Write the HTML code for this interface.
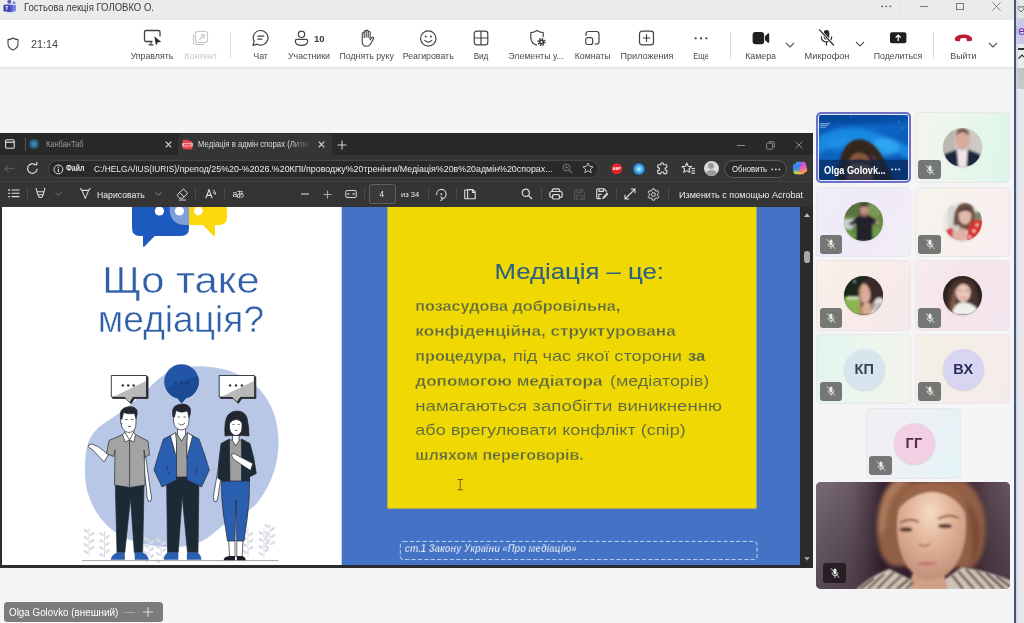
<!DOCTYPE html>
<html lang="ru">
<head>
<meta charset="utf-8">
<title>Гостьова лекція ГОЛОВКО О.</title>
<style>
*{box-sizing:border-box;margin:0;padding:0}
html,body{width:1024px;height:623px;overflow:hidden;background:#f5f5f5}
body{position:relative;font-family:"Liberation Sans",sans-serif;color:#424242;filter:blur(.32px)}
.abs{position:absolute}
#titlebar{left:0;top:0;width:1014px;height:20px;background:#ebebeb}
#titlebar .t{left:23.800px;top:0.500px;font-size:10.300px;line-height:14px;color:#3a3a3a;white-space:nowrap}
#toolbar{left:0;top:20px;width:1014px;height:48.300px;background:#fff;border-bottom:1px solid #e6e6e6;box-shadow:0 1px 2px rgba(0,0,0,.06)}
.tb{position:absolute;top:29.6px;font-size:8.8px;line-height:12px;color:#4a4a4a;white-space:nowrap;text-align:center;transform:translateX(-50%)}
.tb.dis{color:#c4c4c4}
.ico{position:absolute;overflow:visible}
.sep{position:absolute;width:1px;background:#dcdcdc;top:12px;height:26px}
#rightwin{left:1014px;top:0;width:10px;height:623px;background:#e7e7ea;overflow:hidden}
#rightwin .edge{left:0;top:0;width:2.200px;height:623px;background:#435283}
/* browser */
#share{left:0;top:133px;width:813px;height:435px;background:#2d2d2d;overflow:hidden}
#tabbar{left:0;top:0;width:813px;height:22px;background:#292929}
#acttab{left:178px;top:1px;width:154px;height:21px;background:#353535;border-radius:5px 5px 0 0}
#addr{left:0;top:22px;width:813px;height:26px;background:#353535}
#pdfbar{left:0;top:48px;width:813px;height:26px;background:#343434;border-top:1px solid #404040}
.tile{position:absolute;width:94.600px;height:70.400px;border-radius:4.500px;border:1px solid #e9e7ea;overflow:hidden}
.av{position:absolute;left:27px;top:14.300px;width:39px;height:39px;border-radius:50%;overflow:hidden;box-shadow:0 1px 2px rgba(0,0,0,.12)}
.av svg{position:absolute;left:0;top:0}
.av.ini{left:26.500px;top:13.600px;width:41px;height:41px;font-size:14.500px;font-weight:bold;line-height:41px;text-align:center;letter-spacing:.2px}
.mb{position:absolute;left:2.200px;top:46.800px;width:22.800px;height:19.400px;border-radius:3px;background:#747773}
.mb svg{position:absolute;left:5.400px;top:3.700px}
#pdfbar>*{margin-top:-0.9px}
.psep{position:absolute;top:7px;width:1px;height:11px;background:#4e4e4e}
.sx{transform-origin:0 50%}
.wt{position:absolute;color:#e6e6e6;white-space:nowrap;font-size:9.5px;line-height:12px}
#slide{left:2px;top:74px;width:798px;height:358px;background:#fff;overflow:hidden}
#scroll{left:800.200px;top:74px;width:12.800px;height:361px;background:#2b2b2b}
</style>
</head>
<body>
<!-- TITLE BAR -->
<div id="titlebar" class="abs">
  <svg class="ico" style="left:2.500px;top:0" width="14" height="13" viewBox="0 0 14 13" filter="url(#tb05)"><defs><filter id="tb05"><feGaussianBlur stdDeviation="0.350"/></filter></defs><circle cx="6.300" cy="1.800" r="2" fill="#5b5fc7"/><circle cx="11" cy="2.800" r="1.500" fill="#7b83eb"/><path d="M6.500 5 H12.300 Q13 5 13 5.700 V9 Q13 12 10 12 Q7.500 12 6.500 10 Z" fill="#7b83eb"/><path d="M3 4.800 H9.300 Q10 4.800 10 5.500 V9.200 Q10 12.300 6.800 12.300 Q4 12.300 3.500 10 Z" fill="#5b5fc7"/><rect x="0.500" y="4.800" width="6.600" height="6.600" rx="0.800" fill="#3b3fb0"/><path d="M2.300 6.600 H5.300 M3.800 6.600 V10" stroke="#fff" stroke-width="0.900"/></svg>
  <div class="t abs sx" style="transform:scaleX(.925)">Гостьова лекція ГОЛОВКО О.</div>
  <svg class="ico" style="left:881px;top:5px" width="11" height="3" viewBox="0 0 11 3"><circle cx="1.200" cy="1.300" r="0.900" fill="#555"/><circle cx="5.300" cy="1.300" r="0.900" fill="#555"/><circle cx="9.400" cy="1.300" r="0.900" fill="#555"/></svg>
  <div class="abs" style="left:899px;top:0;width:1px;height:20px;background:#e2e2e2"></div>
  <div class="abs" style="left:919.500px;top:5.700px;width:8.300px;height:1px;background:#7a7a7a"></div>
  <div class="abs" style="left:956px;top:2.800px;width:8px;height:7.600px;border:1px solid #7a7a7a"></div>
  <svg class="ico" style="left:991.500px;top:2.200px" width="9" height="9" viewBox="0 0 9 9"><path d="M0.400 0.400 L8.600 8.600 M8.600 0.400 L0.400 8.600" stroke="#7a7a7a" stroke-width="0.900"/></svg>
</div>
<!-- TOOLBAR -->
<div id="toolbar" class="abs">
  <!-- shield + time -->
  <svg class="ico" style="left:7px;top:17px" width="12" height="14" viewBox="0 0 12 14"><path d="M6 1 C4.6 2 2.8 2.5 1 2.6 V6.8 C1 9.8 3 11.8 6 13 C9 11.8 11 9.8 11 6.8 V2.6 C9.2 2.5 7.400 2 6 1 Z" fill="none" stroke="#424242" stroke-width="1.1" stroke-linejoin="round"/></svg>
  <div class="abs" style="left:31px;top:17.4px;font-size:10.8px;line-height:14px;color:#424242">21:14</div>

  <!-- Управлять -->
  <svg class="ico" style="left:143px;top:9px" width="20" height="19" viewBox="0 0 20 19"><path d="M9.500 12.500 H3 Q1.500 12.500 1.500 11 V3 Q1.500 1.500 3 1.500 H15.500 Q17 1.500 17 3 V7.500" fill="none" stroke="#424242" stroke-width="1.3"/><path d="M5.500 15.800 H10.500 M8 12.500 V15.800" stroke="#424242" stroke-width="1.2" fill="none"/><path d="M11.300 7.200 L18.300 13 L14.900 13.200 L13 16.400 Z" fill="#2a2a2a"/></svg>
  <div class="tb" style="left:152px">Управлять</div>
  <!-- Контент -->
  <svg class="ico" style="left:192px;top:10px" width="17" height="16" viewBox="0 0 17 16"><rect x="3.500" y="1.500" width="12" height="11" rx="2.200" fill="none" stroke="#c6c6c6" stroke-width="1.100"/><path d="M1.500 4.500 V12 Q1.500 14.500 4 14.500 H12.500" fill="none" stroke="#c6c6c6" stroke-width="1.100"/><path d="M7 10 L12 5 M8.300 4.800 H12.200 V8.700" fill="none" stroke="#c6c6c6" stroke-width="1.100"/></svg>
  <div class="tb dis" style="left:200.700px">Контент</div>
  <div class="sep" style="left:230px"></div>
  <!-- Чат -->
  <svg class="ico" style="left:251px;top:9px" width="19" height="18" viewBox="0 0 19 18"><path d="M9.700 1.500 A7.300 7.300 0 1 1 6.200 15.200 L2 16.300 L3.200 12.400 A7.300 7.300 0 0 1 9.700 1.500 Z" fill="none" stroke="#424242" stroke-width="1.200" stroke-linejoin="round"/><path d="M6.800 7.200 H12.800 M6.800 10.200 H10.800" stroke="#424242" stroke-width="1.200" stroke-linecap="round"/></svg>
  <div class="tb" style="left:260.600px">Чат</div>
  <!-- Участники -->
  <svg class="ico" style="left:294px;top:10px" width="15" height="17" viewBox="0 0 15 17"><circle cx="7.500" cy="4.300" r="3.200" fill="none" stroke="#424242" stroke-width="1.200"/><path d="M3 9.300 H12 Q13.700 9.300 13.700 11 Q13.700 15.300 7.500 15.300 Q1.300 15.300 1.300 11 Q1.300 9.300 3 9.300 Z" fill="none" stroke="#424242" stroke-width="1.200"/></svg>
  <div class="abs" style="left:314px;top:13px;font-size:9.5px;font-weight:bold;line-height:12px;color:#333">10</div>
  <div class="tb" style="left:309px">Участники</div>
  <!-- Поднять руку -->
  <svg class="ico" style="left:359px;top:9px" width="16" height="19" viewBox="0 0 16 19"><path d="M3.200 11.500 V4.600 Q3.200 3.500 4.200 3.500 Q5.200 3.500 5.200 4.600 V8.500 V2.700 Q5.200 1.600 6.200 1.600 Q7.200 1.600 7.200 2.700 V8.300 V2.200 Q7.200 1.100 8.200 1.100 Q9.200 1.100 9.200 2.200 V8.500 V3.600 Q9.200 2.500 10.200 2.500 Q11.200 2.500 11.200 3.600 V10.800 L12.800 8.600 Q13.700 7.600 14.500 8.300 Q15 8.900 14.500 9.700 L11.700 14.800 Q10.300 17.300 7.600 17.300 Q3.200 17.300 3.200 12.500 Z" fill="none" stroke="#424242" stroke-width="1.100" stroke-linejoin="round"/></svg>
  <div class="tb" style="left:366.600px">Поднять руку</div>
  <!-- Реагировать -->
  <svg class="ico" style="left:419px;top:9px" width="19" height="19" viewBox="0 0 19 19"><circle cx="9.300" cy="9.500" r="7.700" fill="none" stroke="#424242" stroke-width="1.200"/><circle cx="6.700" cy="7.400" r="1" fill="#424242"/><circle cx="11.900" cy="7.400" r="1" fill="#424242"/><path d="M5.800 11.300 Q9.300 14.800 12.800 11.300" fill="none" stroke="#424242" stroke-width="1.200" stroke-linecap="round"/></svg>
  <div class="tb" style="left:428.200px">Реагировать</div>
  <!-- Вид -->
  <svg class="ico" style="left:473px;top:10px" width="16" height="16" viewBox="0 0 16 16"><rect x="1.200" y="1.200" width="13.600" height="13.600" rx="2.600" fill="none" stroke="#424242" stroke-width="1.200"/><path d="M8 1.200 V14.800 M1.200 8 H14.800" stroke="#424242" stroke-width="1.200"/></svg>
  <div class="tb" style="left:481.200px;transform:translateX(-50%) scaleX(.925)">Вид</div>
  <!-- Элементы у... -->
  <svg class="ico" style="left:529px;top:9px" width="18" height="19" viewBox="0 0 18 19"><path d="M8 16.300 C4 14.700 1.800 12.200 1.800 8.400 V3.600 C4 3.500 6.200 2.800 8 1.500 C9.800 2.800 12 3.500 14.200 3.600 V8" fill="none" stroke="#424242" stroke-width="1.200" stroke-linejoin="round"/><circle cx="12.500" cy="13" r="2.700" fill="#3a3a3a"/><circle cx="12.500" cy="13" r="3.400" fill="none" stroke="#3a3a3a" stroke-width="1.400" stroke-dasharray="1.400 1.270"/><circle cx="12.500" cy="13" r="1" fill="#fff"/></svg>
  <div class="tb" style="left:536px">Элементы у...</div>
  <!-- Комнаты -->
  <svg class="ico" style="left:584px;top:10px" width="17" height="16" viewBox="0 0 17 16"><path d="M2 5.500 V4 Q2 1.500 4.500 1.500 H12.500 Q15 1.500 15 4 V11.500 Q15 14 12.500 14 H11" fill="none" stroke="#424242" stroke-width="1.200" stroke-linecap="round"/><rect x="1.700" y="7.700" width="7" height="6.800" rx="2" fill="none" stroke="#424242" stroke-width="1.200"/></svg>
  <div class="tb" style="left:592.700px">Комнаты</div>
  <!-- Приложения -->
  <svg class="ico" style="left:638px;top:10px" width="17" height="16" viewBox="0 0 17 16"><rect x="1.500" y="1.200" width="14" height="13.600" rx="2.600" fill="none" stroke="#424242" stroke-width="1.200"/><path d="M8.500 4.300 V11.700 M4.800 8 H12.200" stroke="#424242" stroke-width="1.200"/></svg>
  <div class="tb" style="left:647.100px;transform:translateX(-50%) scaleX(1.025)">Приложения</div>
  <!-- Еще -->
  <svg class="ico" style="left:693px;top:16px" width="16" height="5" viewBox="0 0 16 5"><circle cx="2.700" cy="2.300" r="1.150" fill="#424242"/><circle cx="8" cy="2.300" r="1.150" fill="#424242"/><circle cx="13.300" cy="2.300" r="1.150" fill="#424242"/></svg>
  <div class="tb" style="left:700.800px;transform:translateX(-50%) scaleX(.87)">Еще</div>
  <div class="sep" style="left:730px"></div>
  <!-- Камера -->
  <svg class="ico" style="left:752px;top:11px" width="18" height="14" viewBox="0 0 18 14"><rect x="0.600" y="1" width="11.600" height="12.200" rx="3" fill="#1f1f1f"/><path d="M13 5.200 L15.600 2.700 Q17.200 1.600 17.200 3.500 V10.700 Q17.200 12.600 15.600 11.500 L13 9 Z" fill="#1f1f1f"/></svg>
  <div class="tb" style="left:760.600px">Камера</div>
  <svg class="ico" style="left:785px;top:22px" width="10" height="6" viewBox="0 0 10 6"><path d="M1 1 L5 5 L9 1" fill="none" stroke="#555" stroke-width="1.100"/></svg>
  <!-- Микрофон -->
  <svg class="ico" style="left:817px;top:8px" width="19" height="19" viewBox="0 0 19 19"><rect x="6.700" y="2" width="5.600" height="9.600" rx="2.800" fill="#2a2a2a"/><path d="M4.300 8.800 Q4.300 13.800 9.500 13.800 Q14.700 13.800 14.700 8.800 M9.500 13.800 V17" fill="none" stroke="#2a2a2a" stroke-width="1.200" stroke-linecap="round"/><path d="M2.500 1.800 L16.500 17" stroke="#fff" stroke-width="2.600"/><path d="M2.500 1.800 L16.500 17" stroke="#2a2a2a" stroke-width="1.200" stroke-linecap="round"/></svg>
  <div class="tb" style="left:827px;transform:translateX(-50%) scaleX(1.045)">Микрофон</div>
  <svg class="ico" style="left:855px;top:21px" width="10" height="6" viewBox="0 0 10 6"><path d="M1 1 L5 5 L9 1" fill="none" stroke="#555" stroke-width="1.100"/></svg>
  <!-- Поделиться -->
  <svg class="ico" style="left:890px;top:12px" width="17" height="12" viewBox="0 0 17 12"><rect x="0" y="0.300" width="16.400" height="11" rx="2" fill="#1f1f1f"/><path d="M8.200 9 V3.200 M5.700 5.500 L8.200 3 L10.700 5.500" fill="none" stroke="#fff" stroke-width="1.200"/></svg>
  <div class="tb" style="left:898px">Поделиться</div>
  <div class="sep" style="left:932.500px"></div>
  <!-- Выйти -->
  <svg class="ico" style="left:954px;top:14px" width="19" height="8" viewBox="0 0 19 8"><path d="M9.500 0.600 C13.500 0.600 17.200 2 18 4.300 C18.400 5.600 18 6.800 17 7 L14.300 7.300 C13.300 7.400 12.800 6.800 12.700 5.900 L12.600 4.500 C11 3.800 8 3.800 6.400 4.500 L6.300 5.900 C6.200 6.800 5.700 7.400 4.700 7.300 L2 7 C1 6.800 0.600 5.600 1 4.300 C1.800 2 5.500 0.600 9.500 0.600 Z" fill="#b91d36"/></svg>
  <div class="tb" style="left:963.300px">Выйти</div>
  <svg class="ico" style="left:988px;top:21.500px" width="10" height="6" viewBox="0 0 10 6"><path d="M1 1 L5 5 L9 1" fill="none" stroke="#555" stroke-width="1.100"/></svg>
</div>
<div id="rightwin" class="abs"><div class="edge abs"></div>
  <div class="abs" style="left:2px;top:0;width:8px;height:18px;background:#e6e6e6"></div>
  <svg class="ico" style="left:2.500px;top:4.500px" width="8" height="8" viewBox="0 0 8 8"><path d="M4 7 Q0 4 0.800 2 Q2 0.500 4 2.500 Q6 0.500 7.200 2 Q8 4 4 7 Z" fill="none" stroke="#555" stroke-width="0.900"/></svg>
  <div class="abs" style="left:2px;top:18px;width:8px;height:26px;background:#c9c8e6"></div>
  <div class="abs" style="left:1.500px;top:24px;font-size:12px;line-height:14px;color:#6b2fb3;white-space:nowrap">lex</div>
  <div class="abs" style="left:2px;top:44px;width:8px;height:26px;background:#ececec"></div>
  <div class="abs" style="left:4px;top:47.500px;width:6px;height:2.500px;background:#333"></div>
  <svg class="ico" style="left:4px;top:54px" width="6" height="5" viewBox="0 0 6 5"><path d="M0.500 4.500 L4 1 L7 4" fill="none" stroke="#333" stroke-width="1.200"/></svg>
  <div class="abs" style="left:2px;top:67.500px;width:8px;height:21.500px;background:linear-gradient(#c2c2c2,#cacaca)"></div><div class="abs" style="left:2px;top:0;width:1.500px;height:623px;background:#d2d2d6;opacity:.7"></div>
</div>
<!-- SHARED SCREEN -->
<div id="share" class="abs">
  <div id="tabbar" class="abs">
    <div id="acttab" class="abs"></div>
    <!-- tab actions icon -->
    <svg class="ico" style="left:5px;top:6px" width="10" height="10" viewBox="0 0 10 10"><rect x="0.600" y="0.800" width="8.600" height="8.400" rx="1.300" fill="none" stroke="#e0e0e0" stroke-width="1.100"/><path d="M0.600 3.200 H9.200" stroke="#e0e0e0" stroke-width="1.200"/></svg>
    <div class="abs" style="left:24.500px;top:5px;width:1px;height:13px;background:#555"></div>
    <div class="abs" style="left:29px;top:6px;width:10px;height:10px;border-radius:50%;background:radial-gradient(circle at 50% 50%,#4f8fb5 0,#2f6a92 40%,#234a66 75%,#26333d 100%)"></div>
    <div class="wt sx" style="left:46.300px;top:5.200px;font-size:8.400px;color:#9c9c9c;transform:scaleX(.89)">КанбанТаб</div>
    <svg class="ico" style="left:164.500px;top:8px" width="7" height="7" viewBox="0 0 7 7"><path d="M0.700 0.700 L6.300 6.300 M6.300 0.700 L0.700 6.300" stroke="#d8d8d8" stroke-width="1.100"/></svg>
    <!-- active tab favicon -->
    <svg class="ico" style="left:182px;top:6px" width="11" height="11" viewBox="0 0 11 11"><path d="M1.500 0.800 H6 L7.200 2 H9.500 Q10.300 2 10.300 2.800 V9.400 Q10.300 10.200 9.500 10.200 H1.500 Q0.700 10.200 0.700 9.400 V1.600 Q0.700 0.800 1.500 0.800 Z" fill="#e5484d"/><rect x="0" y="4" width="11" height="3.600" rx="0.600" fill="#f3a7a9"/><path d="M2 5.800 H9" stroke="#d5383e" stroke-width="1"/></svg>
    <div class="wt sx" style="left:198px;top:5.200px;font-size:8.600px;color:#dcdcdc;transform:scaleX(.9);width:126px;overflow:hidden;-webkit-mask-image:linear-gradient(90deg,#000 80%,transparent 100%);mask-image:linear-gradient(90deg,#000 80%,transparent 100%)">Медіація в адмін спорах (Литвинова)</div>
    <svg class="ico" style="left:317.500px;top:8px" width="7" height="7" viewBox="0 0 7 7"><path d="M0.700 0.700 L6.300 6.300 M6.300 0.700 L0.700 6.300" stroke="#d8d8d8" stroke-width="1.100"/></svg>
    <svg class="ico" style="left:337px;top:6.500px" width="10" height="10" viewBox="0 0 10 10"><path d="M5 0.500 V9.500 M0.500 5 H9.500" stroke="#cfcfcf" stroke-width="1.100"/></svg>
    <!-- window controls -->
    <div class="abs" style="left:737px;top:11.500px;width:8px;height:1px;background:#8a8a8a"></div>
    <svg class="ico" style="left:766px;top:7.500px" width="9" height="9" viewBox="0 0 9 9"><rect x="0.600" y="2.200" width="6" height="6" rx="1" fill="none" stroke="#8a8a8a" stroke-width="1"/><path d="M2.500 0.700 H7 Q8.300 0.700 8.300 2 V6.500" fill="none" stroke="#8a8a8a" stroke-width="1"/></svg>
    <svg class="ico" style="left:795px;top:8px" width="8" height="8" viewBox="0 0 8 8"><path d="M0.600 0.600 L7.400 7.400 M7.400 0.600 L0.600 7.400" stroke="#8a8a8a" stroke-width="1"/></svg>
  </div>
  <div id="addr" class="abs">
    <svg class="ico" style="left:4px;top:8.500px" width="11" height="9" viewBox="0 0 11 9"><path d="M10.300 4.500 H1 M4.500 0.800 L0.800 4.500 L4.500 8.200" fill="none" stroke="#5a5a5a" stroke-width="1.100"/></svg>
    <svg class="ico" style="left:26px;top:6.500px" width="13" height="13" viewBox="0 0 13 13"><path d="M11.200 6.800 A4.800 4.800 0 1 1 9.300 2.700" fill="none" stroke="#e0e0e0" stroke-width="1.100"/><path d="M7.500 2.800 H10.800 V0" fill="none" stroke="#e0e0e0" stroke-width="1.100"/></svg>
    <div id="pill" class="abs" style="left:48px;top:4.500px;width:551px;height:18.500px;border-radius:9.250px;background:#292929;border:1px solid #464646"></div>
    <svg class="ico" style="left:52.500px;top:8.500px" width="11" height="11" viewBox="0 0 11 11"><circle cx="5.400" cy="5.400" r="4.400" fill="none" stroke="#e0e0e0" stroke-width="1"/><path d="M5.400 4.800 V8" stroke="#e0e0e0" stroke-width="1.100"/><circle cx="5.400" cy="3.200" r="0.650" fill="#e0e0e0"/></svg>
    <div class="wt sx" style="left:65.800px;top:8.400px;font-size:8.200px;font-weight:bold;color:#e8e8e8;transform:scaleX(.84)">Файл</div>
    <div class="wt sx" id="url1" style="left:93.500px;top:7.500px;font-size:9.600px;color:#ececec;transform:scaleX(.87)">C:/HELGA/IUS(IURIS)</div><div class="wt sx" id="url2" style="left:176.600px;top:7.500px;font-size:9.600px;color:#ececec;transform:scaleX(.9235)">/препод/25%20-%2026.%20КПІ/проводжу%20тренінги/Медіація%20в%20адмін%20спорах...</div>
    <svg class="ico" style="left:562px;top:8px" width="11" height="11" viewBox="0 0 11 11"><circle cx="4.500" cy="4.500" r="3.400" fill="none" stroke="#777" stroke-width="1"/><path d="M7 7 L10.300 10.300" stroke="#777" stroke-width="1.100"/><path d="M3 4.500 H6 M4.500 3 V6" stroke="#777" stroke-width="0.800"/></svg>
    <svg class="ico" style="left:582px;top:7px" width="12" height="12" viewBox="0 0 12 12"><path d="M6 1 L7.500 4.300 L11.100 4.700 L8.400 7.100 L9.200 10.700 L6 8.800 L2.800 10.700 L3.600 7.100 L0.900 4.700 L4.500 4.300 Z" fill="none" stroke="#b9b9b9" stroke-width="1" stroke-linejoin="round"/></svg>
    <!-- ABP -->
    <svg class="ico" style="left:610.500px;top:7.700px" width="11.500" height="11.500" viewBox="0 0 13 13"><path d="M4 0.500 H9 L12.500 4 V9 L9 12.500 H4 L0.500 9 V4 Z" fill="#e0252d"/><text x="6.500" y="8.300" font-size="4.300" font-weight="bold" fill="#fff" text-anchor="middle" font-family="Liberation Sans, sans-serif">ABP</text></svg>
    <div class="abs" style="left:632.500px;top:7.500px;width:12px;height:12px;border-radius:50%;background:radial-gradient(circle at 50% 50%,#d6f3ff 0,#5fc4f5 30%,#2286d4 58%,#24507c 80%,#2e3a48 100%)"></div>
    <svg class="ico" style="left:656px;top:7px" width="13" height="13" viewBox="0 0 13 13"><path d="M4.800 2.200 Q4.800 0.800 6.200 0.800 Q7.600 0.800 7.600 2.200 V2.800 H10 Q10.800 2.800 10.800 3.600 V5.600 H10.400 Q9 5.600 9 7 Q9 8.400 10.400 8.400 H10.800 V10.800 Q10.800 11.600 10 11.600 H7.800 V11 Q7.800 9.700 6.400 9.700 Q5 9.700 5 11 V11.600 H2.600 Q1.800 11.600 1.800 10.800 V8.400 H2.300 Q3.600 8.400 3.600 7 Q3.600 5.600 2.300 5.600 H1.800 V3.600 Q1.800 2.800 2.600 2.800 H4.800 Z" fill="none" stroke="#e0e0e0" stroke-width="1.100" stroke-linejoin="round"/></svg>
    <svg class="ico" style="left:681px;top:7px" width="15" height="13" viewBox="0 0 15 13"><path d="M5.800 1 L7.200 4.200 L10.600 4.600 L8 6.900 L8.800 10.400 L5.800 8.600 L2.800 10.400 L3.600 6.900 L1 4.600 L4.400 4.200 Z" fill="none" stroke="#e0e0e0" stroke-width="1.100" stroke-linejoin="round"/><path d="M10.500 6.500 H14 M10.500 8.800 H14 M10.500 11.100 H14" stroke="#e0e0e0" stroke-width="1.100"/></svg>
    <!-- avatar -->
    <div class="abs" style="left:703.500px;top:5.500px;width:15.500px;height:15.500px;border-radius:50%;background:#dcdcdc;overflow:hidden"><div class="abs" style="left:4.700px;top:2.800px;width:6px;height:6px;border-radius:50%;background:#9a9a9a"></div><div class="abs" style="left:2px;top:9.500px;width:11.500px;height:9px;border-radius:50%;background:#9a9a9a"></div></div>
    <div class="abs" style="left:723.500px;top:4.500px;width:63px;height:18.500px;border-radius:9.250px;border:1px solid #5a5a5a;background:#2b2b2b"></div>
    <div class="wt sx" style="left:732px;top:8px;font-size:8.600px;color:#ededed;transform:scaleX(.9)">Обновить</div>
    <svg class="ico" style="left:771px;top:12.500px" width="10" height="3" viewBox="0 0 10 3"><circle cx="1.200" cy="1.400" r="0.900" fill="#e0e0e0"/><circle cx="4.800" cy="1.400" r="0.900" fill="#e0e0e0"/><circle cx="8.400" cy="1.400" r="0.900" fill="#e0e0e0"/></svg>
    <!-- copilot -->
    <svg class="ico" style="left:792px;top:5px" width="16" height="16" viewBox="0 0 16 16"><defs><linearGradient id="cpA" x1="0" y1="0" x2="0.300" y2="1"><stop offset="0" stop-color="#2aa8f5"/><stop offset="0.500" stop-color="#3b7df0"/><stop offset="1" stop-color="#6ad06a"/></linearGradient><linearGradient id="cpB" x1="0" y1="0" x2="0.400" y2="1"><stop offset="0" stop-color="#8a5cf0"/><stop offset="0.500" stop-color="#e457c4"/><stop offset="1" stop-color="#f79a4a"/></linearGradient><filter id="cpf"><feGaussianBlur stdDeviation="0.400"/></filter></defs><g filter="url(#cpf)"><path d="M4.600 1.800 H8.400 Q9.600 1.800 9.300 3 L6.600 13 Q6.200 14.300 5 14.300 H3.800 Q1.600 14.300 1.200 12 L0.800 6.500 Q0.800 4.200 3 4 Z" fill="url(#cpA)"/><path d="M9.600 1.800 H11.500 Q13.300 1.800 13.800 3.600 L15.200 9.500 Q15.600 12 13.300 12.200 L11.600 14 Q11.300 14.300 10.700 14.300 H6.800 Q6 14.300 6.300 13.200 L9 3 Q9.300 1.800 9.600 1.800 Z" fill="url(#cpB)"/><path d="M1.500 11 Q3 14.800 6.500 14.300 L8 14.300 Q9.500 14.300 10 12.800 L5 12 Z" fill="#f7cf3a" opacity="0.850"/></g></svg>
  </div>
  <div id="pdfbar" class="abs">
    <!-- contents list -->
    <svg class="ico" style="left:8px;top:8px" width="12" height="9" viewBox="0 0 12 9"><path d="M3.500 1 H11.500 M3.500 4.300 H11.500 M3.500 7.600 H11.500" stroke="#dcdcdc" stroke-width="1.100"/><path d="M0.300 1 H2 M0.300 4.300 H2 M0.300 7.600 H2" stroke="#dcdcdc" stroke-width="1.300"/></svg>
    <div class="psep" style="left:27px"></div>
    <!-- highlighter -->
    <svg class="ico" style="left:35px;top:5.500px" width="11" height="12" viewBox="0 0 12 13"><path d="M1.200 0.800 L2.200 5.200 H9.800 L10.800 0.800" fill="none" stroke="#dcdcdc" stroke-width="1.100" stroke-linejoin="round"/><path d="M2.200 5.200 L3.400 9.300 L5 11.500 H7.200 L8.600 9.300 L9.800 5.200 M3.400 8.500 H8.600" fill="none" stroke="#dcdcdc" stroke-width="1.100" stroke-linejoin="round"/></svg>
    <svg class="ico" style="left:54.500px;top:11px" width="7" height="4" viewBox="0 0 7 4"><path d="M0.500 0.500 L3.500 3.300 L6.500 0.500" fill="none" stroke="#777" stroke-width="1"/></svg>
    <!-- draw pen -->
    <svg class="ico" style="left:78.500px;top:5.500px" width="12.500" height="12.500" viewBox="0 0 13 13"><path d="M1 1.200 L3 3.500 H10 L12 1.200 M3 3.500 L6.500 11.800 L10 3.500" fill="none" stroke="#dcdcdc" stroke-width="1.100" stroke-linejoin="round"/></svg>
    <div class="wt sx" style="left:97px;top:7.400px;font-size:9.600px;color:#ececec;transform:scaleX(.905)">Нарисовать</div>
    <svg class="ico" style="left:154.500px;top:11px" width="7" height="4" viewBox="0 0 7 4"><path d="M0.500 0.500 L3.500 3.300 L6.500 0.500" fill="none" stroke="#8a8a8a" stroke-width="1"/></svg>
    <!-- eraser -->
    <svg class="ico" style="left:175.500px;top:6.500px" width="13" height="13" viewBox="0 0 13 13"><path d="M7.300 1 L11.700 5.200 L6.600 10.200 H3.800 L1.300 7.800 Q0.800 7.200 1.300 6.700 Z M3.500 4.600 L8.300 9" fill="none" stroke="#dcdcdc" stroke-width="1" stroke-linejoin="round"/><path d="M3 12 H10" stroke="#dcdcdc" stroke-width="1"/></svg>
    <div class="psep" style="left:195px"></div>
    <!-- read aloud A -->
    <svg class="ico" style="left:204.500px;top:7.500px" width="12" height="10" viewBox="0 0 12 10"><path d="M0.800 9.300 L4 0.800 L7.200 9.300 M1.900 6.400 H6.100" fill="none" stroke="#dcdcdc" stroke-width="1.100"/><path d="M8 0.800 Q11 2.500 10.600 5.800 M8 2.800 Q9.300 3.600 9.200 5" fill="none" stroke="#dcdcdc" stroke-width="0.900"/></svg>
    <div class="psep" style="left:223.500px"></div>
    <div class="wt" style="left:232.500px;top:7.300px;font-size:8.500px;color:#ececec;font-family:'Liberation Sans','Noto Sans CJK JP',sans-serif;letter-spacing:-1.300px;line-height:12px">aあ</div>
    <!-- zoom - + -->
    <div class="abs" style="left:301px;top:12.300px;width:8px;height:1.100px;background:#8c8c8c"></div>
    <svg class="ico" style="left:322.500px;top:8.500px" width="9" height="9" viewBox="0 0 9 9"><path d="M4.500 0.500 V8.500 M0.500 4.500 H8.500" stroke="#a8a8a8" stroke-width="1.100"/></svg>
    <svg class="ico" style="left:344.500px;top:8.800px" width="12" height="8" viewBox="0 0 13 9"><rect x="0.600" y="0.600" width="11.800" height="7.800" rx="1.300" fill="none" stroke="#dcdcdc" stroke-width="1.100"/><path d="M2.600 4.500 H5 M8 4.500 H10.400 M3.800 3.300 L2.600 4.500 L3.800 5.700 M9.200 3.300 L10.400 4.500 L9.200 5.700" fill="none" stroke="#dcdcdc" stroke-width="0.900"/></svg>
    <div class="psep" style="left:364px"></div>
    <div class="abs" style="left:369px;top:2.500px;width:26.500px;height:20.500px;border:1px solid #5f5f5f;border-radius:2.500px;background:#3a3a3a"></div>
    <div class="wt" style="left:379.500px;top:7.600px;font-size:8.200px;color:#f0f0f0">4</div>
    <div class="wt sx" style="left:401px;top:7.800px;font-size:8px;color:#ececec;transform:scaleX(.94)">из 34</div>
    <div class="psep" style="left:427.500px"></div>
    <!-- rotate -->
    <svg class="ico" style="left:435px;top:6.500px" width="13" height="14" viewBox="0 0 13 14"><path d="M1.800 7 A4.700 4.700 0 1 1 7.500 10.700" fill="none" stroke="#dcdcdc" stroke-width="1.100"/><path d="M5.600 8.700 L7.700 10.800 L5.600 12.900" fill="none" stroke="#dcdcdc" stroke-width="1.100"/><circle cx="6.300" cy="6.200" r="0.900" fill="#dcdcdc"/></svg>
    <div class="psep" style="left:455.500px"></div>
    <!-- page view -->
    <svg class="ico" style="left:464px;top:7.500px" width="12" height="11" viewBox="0 0 12 11"><path d="M3.600 1 H0.800 V9.800 H3.600 M3.600 0.600 H8.800 L11.200 3 V9.800 H3.600 Z M8.400 0.800 V3.400 H11" fill="none" stroke="#dcdcdc" stroke-width="1.100" stroke-linejoin="round"/></svg>
    <!-- search -->
    <svg class="ico" style="left:521px;top:7px" width="12" height="12" viewBox="0 0 12 12"><circle cx="4.800" cy="4.800" r="3.600" fill="none" stroke="#dcdcdc" stroke-width="1.200"/><path d="M7.500 7.500 L11 11" stroke="#dcdcdc" stroke-width="1.300"/></svg>
    <div class="psep" style="left:541px"></div>
    <!-- print -->
    <svg class="ico" style="left:549px;top:7px" width="14" height="12" viewBox="0 0 14 12"><path d="M3.300 3.500 V2.500 Q3.300 0.800 5 0.800 H9 Q10.700 0.800 10.700 2.500 V3.500" fill="none" stroke="#dcdcdc" stroke-width="1.200"/><rect x="0.800" y="3.500" width="12.400" height="6" rx="2" fill="none" stroke="#dcdcdc" stroke-width="1.200"/><rect x="3.600" y="6.600" width="6.800" height="4.400" rx="1" fill="#2d2d2d" stroke="#dcdcdc" stroke-width="1.200"/></svg>
    <!-- save (dim) -->
    <svg class="ico" style="left:573.500px;top:7.500px" width="11" height="11" viewBox="0 0 11 11"><path d="M1.800 0.700 H8 L10.300 3 V9.200 Q10.300 10.300 9.200 10.300 H1.800 Q0.700 10.300 0.700 9.200 V1.800 Q0.700 0.700 1.800 0.700 Z M3 0.700 V3.400 H7.400 V0.700 M2.800 10.300 V6.200 H8.200 V10.300" fill="none" stroke="#575757" stroke-width="1.100"/></svg>
    <!-- save as -->
    <svg class="ico" style="left:595.500px;top:7px" width="13" height="12" viewBox="0 0 13 12"><path d="M5 10.600 H1.800 Q0.700 10.600 0.700 9.500 V1.800 Q0.700 0.700 1.800 0.700 H8 L10.300 3 V4.400 M3 0.700 V3.400 H7.400 V0.700 M2.800 10.600 V6.200 H6" fill="none" stroke="#dcdcdc" stroke-width="1.100"/><path d="M6.200 11.300 L6.800 8.900 L10.600 5.100 Q11.300 4.500 12 5.200 Q12.600 5.900 12 6.500 L8.200 10.400 Z" fill="#dcdcdc"/></svg>
    <div class="psep" style="left:616px"></div>
    <!-- expand -->
    <svg class="ico" style="left:624px;top:7px" width="12" height="12" viewBox="0 0 12 12"><path d="M1 11 L11 1 M6.800 1 H11 V5.200 M1 6.800 V11 H5.200" fill="none" stroke="#dcdcdc" stroke-width="1.100"/></svg>
    <!-- gear -->
    <svg class="ico" style="left:647px;top:6.500px" width="13" height="13" viewBox="0 0 13 13"><circle cx="6.500" cy="6.500" r="1.900" fill="none" stroke="#dcdcdc" stroke-width="1"/><path d="M5.400 0.900 H7.600 L8 2.500 L9.100 3.100 L10.700 2.600 L11.800 4.500 L10.600 5.700 V7.300 L11.800 8.500 L10.700 10.400 L9.100 9.900 L8 10.500 L7.600 12.100 H5.400 L5 10.500 L3.900 9.900 L2.300 10.400 L1.200 8.500 L2.400 7.300 V5.700 L1.200 4.500 L2.300 2.600 L3.900 3.100 L5 2.500 Z" fill="none" stroke="#dcdcdc" stroke-width="1" stroke-linejoin="round"/></svg>
    <div class="psep" style="left:668px"></div>
    <div class="wt sx" style="left:678.500px;top:7.400px;font-size:9.700px;color:#ececec;transform:scaleX(.933)">Изменить с помощью Acrobat</div>
  </div>
  <div id="slide" class="abs">
  <svg width="798" height="359" viewBox="2 207 798 359" style="position:absolute;left:0;top:0" font-family="Liberation Sans, sans-serif">
    <defs>
      <filter id="b1" x="-5%" y="-5%" width="110%" height="110%"><feGaussianBlur stdDeviation="0.450"/></filter>
      <filter id="b0" x="-5%" y="-5%" width="110%" height="110%"><feGaussianBlur stdDeviation="0.350"/></filter>
    </defs>
    <rect x="2" y="207" width="340" height="359" fill="#fff"/>
    <rect x="341.700" y="207" width="458.500" height="359" fill="#4472c4"/>
    <rect x="387.400" y="207" width="369.100" height="301.600" fill="#f0d903"/>
    <!-- logo bubbles -->
    <g filter="url(#b1)">
      <path d="M132 200 H189 V228 Q189 236 181 236 H154.700 L144.500 246.500 Q143 247.500 143 245.500 V236 H140 Q132 236 132 228 Z" fill="#1f5abf"/>
      <path d="M189 200 H227 V217 Q227 225 219 225 H215 V235 Q215 237 213 235.500 L203 225 H189 Z" fill="#fdd80d"/>
      <path d="M169.500 200 H189 V225 H186 Q169.500 225 169.500 208 Z" fill="#7d9fda"/>
      <circle cx="159.400" cy="211" r="4.600" fill="#fff"/>
      <circle cx="179.400" cy="211" r="4.600" fill="#fff"/>
      <circle cx="198.400" cy="211" r="4.400" fill="#fff"/>
    </g>
    <!-- left title -->
    <g fill="#2f5fa8" font-size="36.500" filter="url(#b0)" stroke="#fff" stroke-width="0.450">
      <text x="102.300" y="292.700" textLength="157.300" lengthAdjust="spacingAndGlyphs">Що таке</text>
      <text x="97.800" y="332" textLength="166.300" lengthAdjust="spacingAndGlyphs">медіація?</text>
    </g>
    <!-- PEOPLE -->
    <g id="people-illu" filter="url(#b1)" stroke-linejoin="round">
      <!-- blob -->
      <path d="M86 452 C88 437 96 428 106 422 C122 412 134 402 146 391 C156 381 166 370 182 367.500 C205 364 232 368 250 381 C268 394 278 415 278.500 440 C279 462 272 484 258 502 C246 516 232 518 222 526 C212 535 204 542 190 545.500 C172 549 150 547 130 540 C108 532 92 512 86.500 488 C84.500 476 84.500 464 86 452 Z" fill="#b9c7e6"/>
      <!-- plants -->
      <g fill="none" stroke="#d6d9e1" stroke-width="0.900">
        <path d="M89 556 V528 M104.500 558 V531 M149 556 V539 M161 556 V540 M248 557 V527 M264 558 V528 M270 545 V524"/>
      </g>
      <g fill="#d9dce4">
        <g id="lf1"><ellipse cx="86" cy="531" rx="2.600" ry="1.300" transform="rotate(35 86 531)"/><ellipse cx="92" cy="534" rx="2.600" ry="1.300" transform="rotate(-35 92 534)"/><ellipse cx="86" cy="538" rx="2.600" ry="1.300" transform="rotate(35 86 538)"/><ellipse cx="92" cy="541" rx="2.600" ry="1.300" transform="rotate(-35 92 541)"/><ellipse cx="86" cy="545" rx="2.600" ry="1.300" transform="rotate(35 86 545)"/><ellipse cx="92" cy="548" rx="2.600" ry="1.300" transform="rotate(-35 92 548)"/><ellipse cx="86" cy="552" rx="2.600" ry="1.300" transform="rotate(35 86 552)"/></g>
        <use href="#lf1" x="15.500" y="3"/>
        <use href="#lf1" x="60" y="8" transform="translate(0 0)"/>
        <use href="#lf1" x="72" y="9"/>
        <use href="#lf1" x="159" y="0"/>
        <use href="#lf1" x="175" y="2"/>
        <use href="#lf1" x="181" y="-5"/>
      </g>
      <rect x="143" y="538" width="24" height="9" fill="#fff" opacity="0"/>
      <!-- ground -->
      <path d="M82 560.600 H278.500" stroke="#8d8d8d" stroke-width="0.800"/>
      <!-- speech bubbles -->
      <g stroke="#2a2a33" stroke-width="0.900">
        <path d="M112.700 376.800 H148 V398.400 H134.500 L131.200 403.800 L126 398.400 H112.700 Z" fill="#2a2a33"/>
        <path d="M111.300 375.500 H146.500 V397 H133 L129.700 402.400 L124.500 397 H111.300 Z" fill="#fff"/>
        <path d="M220.600 376.800 H255.800 V398.400 H241.800 L238.300 403.400 L233.300 398.400 H220.600 Z" fill="#2a2a33"/>
        <path d="M219.200 375.500 H254.400 V397 H240.400 L236.900 402 L231.900 397 H219.200 Z" fill="#fff"/>
      </g>
      <path d="M146 381 V396.500 H133 L129.700 401.500 L125 396.500 H114 Z" fill="#b9b9b9"/>
      <path d="M254 381 V396.500 H240.400 L236.900 401.200 L232.300 396.500 H222 Z" fill="#b9b9b9"/>
      <g fill="#2a2a33"><circle cx="122.800" cy="385.400" r="1.200"/><circle cx="128.200" cy="385.400" r="1.200"/><circle cx="133.600" cy="385.400" r="1.200"/><circle cx="230.100" cy="385.400" r="1.200"/><circle cx="236" cy="385.400" r="1.200"/><circle cx="241.900" cy="385.400" r="1.200"/></g>
      <path d="M181.500 364.300 A17.300 17.300 0 0 1 186 398.300 L181.500 403.600 L177.800 398.500 A17.300 17.300 0 0 1 181.500 364.300 Z" fill="#2355a5"/>
      <path d="M166 388 Q182 380 198 376 A17.300 17.300 0 0 1 186 398.300 L181.500 403.600 L177.800 398.500 A17.300 17.300 0 0 1 166 388 Z" fill="#1f4c96"/>
      <g fill="#173a78"><circle cx="175.400" cy="382.700" r="1.200"/><circle cx="181.500" cy="382.700" r="1.200"/><circle cx="187.300" cy="382.700" r="1.200"/></g>

      <!-- MAN 1 -->
      <g stroke="#252a33" stroke-width="0.700">
        <!-- left arm extended -->
        <path d="M110 452 L104 462 L92.500 449.500 L89 447.500 L88.500 445 L92 444 L95 445.500 L98 446.500 L109 455 Z" fill="#fff"/>
        <!-- right arm -->
        <path d="M145.500 455 L150 488 L151.500 497 L151 501 L148.500 501.500 L147 497 L146.500 489 L143 462 Z" fill="#fff"/>
        <!-- pants -->
        <path d="M115.300 484 H144 L142.700 552.500 H134.300 L130.500 498 L124.800 552.500 H117 Z" fill="#1f2a36"/>
        <!-- shoes -->
        <path d="M117 552.500 H124.800 V559.800 H110.800 Q111 555.500 117 552.500 Z" fill="#2b5fb0" stroke="none"/>
        <path d="M134.500 552.500 H142.600 Q148.500 555.500 148.800 559.800 H134.800 Z" fill="#2b5fb0" stroke="none"/>
        <!-- shirt -->
        <path d="M122.500 434.500 L109 440.500 L106.500 453.500 L113.500 456.500 L115 450 L114.500 485 L130 487.500 L145.200 485 L144 450 L145 457 L149.500 455 L148 441 L135.500 434.500 Z" fill="#a3a3a3"/>
        <path d="M129.600 440 V487" fill="none"/>
        <!-- neck + collar -->
        <path d="M125 428 V436 L129.500 440.500 L134 436 V428 Z" fill="#fff"/>
        <path d="M122.500 434.500 L125 432.500 L129.600 440 L125 442 Z M135.500 434.500 L133.500 432.500 L129.600 440 L134 442 Z" fill="#fff"/>
        <!-- head -->
        <path d="M121 416 Q120.500 408 128.500 408 Q136.300 408 136 416 V423 Q136 432 129 432.500 Q122 432 121 423 Z" fill="#fff"/>
        <path d="M120.500 419 Q119 408 127 407 Q134 405.500 137 410 Q137.500 415 136 418.500 L134.500 413.500 Q128 414.500 123.500 412.500 L122 419 Z" fill="#23262e"/>
        <path d="M122.200 419 Q120.200 419 120.600 422 Q121 424 122.400 423.600" fill="#fff"/>
      </g>
      <path d="M125 419.500 H127.500 M131 419.500 H133.500 M128 426.500 H131" stroke="#252a33" stroke-width="0.700"/>

      <!-- MAN 2 -->
      <g stroke="#252a33" stroke-width="0.700">
        <!-- pants -->
        <path d="M166.500 474 H199 L198 552.500 H187.500 L182.200 496 L178.200 552.500 H167.500 Z" fill="#1f2a36"/>
        <path d="M167.500 552.500 H178.300 V559.800 H163.700 Q164 555.500 167.500 552.500 Z" fill="#2b5fb0" stroke="none"/>
        <path d="M187 552.500 H198 Q201.200 555.500 201.500 559.800 H186.800 Z" fill="#2b5fb0" stroke="none"/>
        <!-- shirt grey -->
        <path d="M175 434 H188 V477 H175.500 Z" fill="#9e9e9e"/>
        <!-- neck -->
        <path d="M177.500 426 V434.500 L181.500 441 L185.500 434.500 V426 Z" fill="#fff"/>
        <!-- jacket left half -->
        <path d="M174.500 433.500 L163.500 439 Q158 455 154 470 L162 487 L176.500 480 L176.500 445 Z" fill="#2b5fb0"/>
        <path d="M188.500 433.500 L199 439 Q205 455 209.300 470 L201.500 487 L187 480 L187 445 Z" fill="#2b5fb0"/>
        <!-- hood/collar white -->
        <path d="M175.500 432.500 L170.500 436 L176.500 458 L176.500 442 Z M187.500 432.500 L192.500 436 L187 458 L187 442 Z" fill="#fff"/>
        <!-- head -->
        <path d="M173.500 414 Q173 405.500 181.300 405.500 Q189.500 405.500 189 414 V421 Q188.500 429.500 181.300 430 Q174 429.500 173.500 421 Z" fill="#fff"/>
        <path d="M173 417 Q170.500 406 179 404.500 Q188 402.500 190.500 409 Q191 414 189 417.500 L187.500 411 Q181 413.500 176 410.500 L174.500 417 Z" fill="#23262e"/>
      </g>
      <path d="M177.500 417 H179.800 M183.500 417 H185.800 M178.500 423.500 Q181.500 426.500 185 423" stroke="#252a33" stroke-width="0.700" fill="none"/>
      <path d="M166.500 466 L169 474 M197.500 466 L195 474" stroke="#173a78" stroke-width="0.800"/>

      <!-- WOMAN -->
      <g stroke="#252a33" stroke-width="0.700">
        <!-- hanging arm -->
        <path d="M220.500 455 L215 487 L213.300 497 L214.300 501.500 L216.800 501.500 L218 497 L222 470 Z" fill="#fff"/>
        <!-- ankles -->
        <path d="M228.700 540 H235 V557 H229.500 Z M236.800 540 H243 L242.200 557 H236.800 Z" fill="#fff"/>
        <path d="M223.600 560.300 Q224 556.500 229.500 556 H235 V560.300 Z M236.800 556 H242.200 Q245.500 557 245.800 560.300 H236.800 Z" fill="#1c1f26" stroke="none"/>
        <!-- pants -->
        <path d="M221.500 478 H249.600 Q250 500 247 520 L244 541 H236.800 L235.800 500 L235 541 H227.500 L223.500 515 Q221 498 221.500 478 Z" fill="#2b5fb0"/>
        <!-- grey shirt -->
        <path d="M229 440 H242 V481 H229 Z" fill="#9e9e9e"/>
        <!-- neck -->
        <path d="M232.500 434 V440.500 L235.800 446 L239 440.500 V434 Z" fill="#fff"/>
        <!-- jacket -->
        <path d="M229.500 439 L221 443.500 Q218.500 460 217.800 478 L223 481.500 L230 481 L229.500 455 Z" fill="#1f2a36"/>
        <path d="M241.500 439 L250 443.500 Q254.500 458 256.300 473.500 L249.500 477 L249.300 481 L241.500 481 L241.800 455 Z" fill="#1f2a36"/>
        <!-- bent arm -->
        <path d="M250.500 470.500 L236 461 L232.500 458 L231.500 454.500 L234 453.500 L238.500 456 L252.800 463.500 Z" fill="#fff"/>
        <!-- hair back -->
        <path d="M225 436 Q224 420 228 415 Q232 410.500 238 411 Q245 411.500 247 418 Q249 426 249 436 L242 435.500 L230 435.500 Z" fill="#23262e"/>
        <!-- face -->
        <path d="M229.500 421 Q231 416.500 236 417 Q241.500 417.500 242 423 V428 Q241.500 435 236 435.500 Q230.500 435 229.500 428 Z" fill="#fff"/>
        <path d="M229 424 Q229 415.500 236 415.500 Q243 415.500 243 424 Q240 419.500 236.500 419.500 Q232 419.500 229 424 Z" fill="#23262e"/>
      </g>
      <path d="M232.500 424.500 H234.500 M237.800 424.500 H239.800 M234.800 430.500 H237.500" stroke="#252a33" stroke-width="0.700"/>
    </g>
    <!-- right heading -->
    <text x="494.600" y="278.200" textLength="169.400" lengthAdjust="spacingAndGlyphs" font-size="22" fill="#2d6182" stroke="#2d6182" stroke-width="0.100" transform="translate(0 0.600)" filter="url(#b0)">Медіація – це:</text>
    <g font-size="15" fill="#5b6846" filter="url(#b0)" stroke="#f0d903" stroke-width="0.100" transform="translate(0 -0.200)">
      <text x="415.300" y="311.400" textLength="205" lengthAdjust="spacingAndGlyphs" font-weight="bold" stroke-width="0.300">позасудова добровільна,</text>
      <text x="415.300" y="335.800" textLength="260.500" lengthAdjust="spacingAndGlyphs" font-weight="bold" stroke-width="0.300">конфіденційна, структурована</text>
      <text x="415.300" y="361" textLength="91" lengthAdjust="spacingAndGlyphs" font-weight="bold" stroke-width="0.300">процедура,</text>
      <text x="513" y="361" textLength="169" lengthAdjust="spacingAndGlyphs">під час якої сторони</text>
      <text x="688" y="361" textLength="17.200" lengthAdjust="spacingAndGlyphs" font-weight="bold" stroke-width="0.050">за</text>
      <text x="415.300" y="385.900" textLength="187.200" lengthAdjust="spacingAndGlyphs" font-weight="bold" stroke-width="0.300">допомогою медіатора</text>
      <text x="610" y="385.900" textLength="99.300" lengthAdjust="spacingAndGlyphs">(медіаторів)</text>
      <text x="415.300" y="410.800" textLength="306.700" lengthAdjust="spacingAndGlyphs">намагаються запобігти виникненню</text>
      <text x="415.300" y="435.600" textLength="270.400" lengthAdjust="spacingAndGlyphs">або врегулювати конфлікт (спір)</text>
      <text x="415.300" y="460.400" textLength="168.500" lengthAdjust="spacingAndGlyphs" font-weight="bold" stroke-width="0.300">шляхом переговорів.</text>
    </g>
    <!-- I-beam cursor -->
    <path d="M457.600 479.500 H462.900 M460.250 479.500 V489.800 M457.600 489.800 H462.900" stroke="#6e6122" stroke-width="1" fill="none"/>
    <!-- footnote -->
    <rect x="400.300" y="541.400" width="356.700" height="18.200" rx="3" fill="none" stroke="#cfe0f7" stroke-width="0.900" stroke-dasharray="4.200 2.200"/>
    <text x="404.800" y="551.700" textLength="171.800" lengthAdjust="spacingAndGlyphs" font-size="10" font-style="italic" font-weight="bold" fill="#dbe6f6" stroke="#4472c4" stroke-width="0.250" filter="url(#b0)">ст.1 Закону України «Про медіацію»</text>
  </svg>
  </div>
  <div id="scroll" class="abs">
    <svg class="ico" style="left:3.700px;top:5.500px" width="6" height="4" viewBox="0 0 6 4"><path d="M0 4 L3 0.300 L6 4 Z" fill="#bdbdbd"/></svg>
    <div class="abs" style="left:3.800px;top:44.300px;width:5.600px;height:11.600px;border-radius:2.800px;background:#a6a6a6"></div>
    <svg class="ico" style="left:3.700px;top:350px" width="6" height="4" viewBox="0 0 6 4"><path d="M0 0 L3 3.700 L6 0 Z" fill="#9a9a9a"/></svg>
  </div>
</div>
<!-- PARTICIPANTS -->
<div id="people">
  <svg width="0" height="0" style="position:absolute">
    <defs>
      <filter id="vb" x="-20%" y="-20%" width="140%" height="140%"><feGaussianBlur stdDeviation="2.200"/></filter>
      <filter id="vb2" x="-20%" y="-20%" width="140%" height="140%"><feGaussianBlur stdDeviation="1.200"/></filter>
      <filter id="vb3" x="-20%" y="-20%" width="140%" height="140%"><feGaussianBlur stdDeviation="0.700"/></filter>
      <filter id="vb3b" x="-20%" y="-20%" width="140%" height="140%"><feGaussianBlur stdDeviation="0.950"/></filter>
      <filter id="vb5" x="-30%" y="-30%" width="160%" height="160%"><feGaussianBlur stdDeviation="5"/></filter>
      <symbol id="micoff" viewBox="0 0 12 12"><rect x="4.500" y="1.600" width="3" height="5.600" rx="1.500" fill="#eaeaea"/><path d="M3 5.800 Q3 8.700 6 8.700 Q9 8.700 9 5.800 M6 8.700 V10.600" fill="none" stroke="#eaeaea" stroke-width="0.800" stroke-linecap="round"/><path d="M2.200 1.600 L9.800 10.400" stroke="#eaeaea" stroke-width="0.900" stroke-linecap="round"/></symbol>
    </defs>
  </svg>
  <!-- tile 1: Olga video -->
  <div class="abs" style="left:816.400px;top:112px;width:95px;height:70.800px;border-radius:5px;background:#6c70cb"></div>
  <div class="abs" style="left:818.400px;top:114px;width:91px;height:66.800px;border-radius:3.500px;background:#e9e9f8"></div>
  <div class="abs" style="left:819.300px;top:115px;width:89.200px;height:64.900px;border-radius:2.500px;overflow:hidden;background:#0b55a8">
    <svg width="89" height="65" viewBox="0 0 89 65" style="position:absolute;left:0;top:0">
      <defs>
        <linearGradient id="sky" x1="0" y1="0" x2="0.600" y2="1"><stop offset="0" stop-color="#0a4aa0"/><stop offset="0.400" stop-color="#0e66c6"/><stop offset="1" stop-color="#0a54ae"/></linearGradient>
      </defs>
      <rect width="89" height="65" fill="url(#sky)"/>
      <g filter="url(#vb)">
        <path d="M-5 24 Q25 6 52 16 T100 36 V50 Q66 30 36 30 T-5 42 Z" fill="#1b8fe8" opacity="0.850"/>
        <ellipse cx="66" cy="32" rx="14" ry="9" fill="#35aef5" opacity="0.800"/>
        <ellipse cx="22" cy="30" rx="14" ry="6" fill="#1f95ea" opacity="0.600"/>
        <ellipse cx="45" cy="3" rx="50" ry="6" fill="#094494" opacity="0.700"/>
      </g>
      <g filter="url(#vb2)">
        <path d="M17 70 Q19 42 27 31 Q35 22 45 25 Q57 28 64 43 Q71 57 78 70 Z" fill="#35261e"/>
        <path d="M28 70 Q27 42 37 38 Q48 36 52 48 Q54 58 54 70 Z" fill="#84573f"/>
        <path d="M28 52 Q38 43 54 52 L53 49 Q41 41 29 48 Z" fill="#2a1b15"/>
        <path d="M52 40 Q58 44 60 56" stroke="#6a4a7a" stroke-width="2" fill="none" opacity="0.600"/>
      </g>
      <rect x="0.800" y="8.200" width="10" height="1.100" fill="#cfe4ff" opacity="0.650"/><rect x="0.800" y="10.100" width="8" height="1.100" fill="#cfe4ff" opacity="0.550"/><rect x="0.800" y="12" width="6" height="1.100" fill="#cfe4ff" opacity="0.450"/>
      <circle cx="80" cy="7" r="0.600" fill="#bfe0ff" opacity="0.800"/><circle cx="84" cy="13" r="0.500" fill="#bfe0ff" opacity="0.700"/><circle cx="32" cy="2" r="0.500" fill="#bfe0ff" opacity="0.700"/>
      <rect x="0" y="44.800" width="89" height="21" fill="#06224a" opacity="0.600"/>
    </svg>
    <div class="abs sx" style="left:4.800px;top:50.400px;font-size:10.200px;line-height:12px;font-weight:bold;color:#fff;white-space:nowrap;transform:scaleX(.9)">Olga Golovk...</div>
    <svg class="ico" style="left:72px;top:53.400px" width="10" height="3" viewBox="0 0 10 3"><circle cx="1.200" cy="1.400" r="0.950" fill="#fff"/><circle cx="4.700" cy="1.400" r="0.950" fill="#fff"/><circle cx="8.200" cy="1.400" r="0.950" fill="#fff"/></svg>
  </div>

  <!-- tile 2 (r1c2) -->
  <div class="tile" style="left:915.300px;top:112.300px;background:linear-gradient(100deg,#f4f5ee 0%,#eaf6ee 45%,#ddf5ea 100%)">
    <div class="av"><svg width="39" height="39" viewBox="0 0 39 39"><rect width="39" height="39" fill="#c9c3be"/><g filter="url(#vb3b)"><rect x="0" y="0" width="11" height="39" fill="#bdb7b2"/><rect x="28" y="0" width="11" height="39" fill="#cfc9c4"/><ellipse cx="19.400" cy="11.500" rx="6.700" ry="9.500" fill="#d9aa9c"/><path d="M12.600 9 Q13 0.500 19.400 0.800 Q26 0.500 26.300 9 Q24 3.800 19.400 4.200 Q15 3.800 12.600 9 Z" fill="#6a4a3a"/><path d="M-1 39 L1.500 26 Q8 23.500 14 21.500 L19.500 34 L25 21.500 Q31 23.500 36.800 26 L40 39 Z" fill="#1e2840"/><path d="M13.800 21.300 Q19.400 24 24.600 21.300 L23.500 39 H15.500 Z" fill="#f0e6ea"/></g></svg></div>
    <div class="mb"><svg width="12" height="12"><use href="#micoff"/></svg></div>
  </div>
  <!-- r2c1 -->
  <div class="tile" style="left:816.400px;top:186.900px;background:linear-gradient(120deg,#eeeef9 0%,#efeaf7 50%,#f2eef7 100%)">
    <div class="av"><svg width="39" height="39" viewBox="0 0 39 39"><rect width="39" height="39" fill="#6b8a48"/><g filter="url(#vb3b)"><rect x="0" y="0" width="39" height="14" fill="#587240"/><ellipse cx="30" cy="8" rx="9" ry="7" fill="#7a9a58"/><rect x="0" y="26" width="39" height="13" fill="#6f9a46"/><path d="M-2 17 H10 Q12 22 9 27 H-2 Z" fill="#c9cdd0"/><ellipse cx="20.200" cy="7.500" rx="3.800" ry="5.400" fill="#c48e86"/><path d="M16.200 5.500 Q16.500 0.500 20.200 0.800 Q24 0.500 24.200 5.500 Q20 3 16.200 5.500Z" fill="#3c3030"/><path d="M12 39 L12.500 16 Q14 12.500 20 12.400 Q26.500 12.500 28 16 L28.500 39 Z" fill="#20202a"/><path d="M16 13.500 Q20 16.500 24.500 13.500 L24 12 H16.500 Z" fill="#9a5a62"/><path d="M13 15 L6.500 20.500 L7.500 23 L13.500 21 Z M27.500 15 L33.500 19.500 L32.500 22.500 L27 21 Z" fill="#25252e"/><circle cx="6.800" cy="21.600" r="1.500" fill="#2a2a30"/><circle cx="33" cy="20.500" r="1.600" fill="#caa090"/><path d="M9 22 L9.500 32" stroke="#2a2a2a" stroke-width="0.800"/></g></svg></div>
    <div class="mb"><svg width="12" height="12"><use href="#micoff"/></svg></div>
  </div>
  <!-- r2c2 -->
  <div class="tile" style="left:915.300px;top:186.900px;background:linear-gradient(120deg,#f6f3ec 0%,#f8f1ee 50%,#f7eef0 100%)">
    <div class="av"><svg width="39" height="39" viewBox="0 0 39 39"><rect width="39" height="39" fill="#eceae6"/><g filter="url(#vb3b)"><rect x="5" y="4" width="8" height="22" fill="#d8d6d2"/><rect x="29" y="10" width="10" height="10" fill="#7a8a6a"/><path d="M11 28 Q9 8 17 2.500 Q23 -1 29 3.500 Q33 9 31.500 24 L28 28 Z" fill="#6b5142"/><ellipse cx="22" cy="13.800" rx="6.300" ry="8.800" fill="#e2b9aa"/><path d="M15.500 11 Q17 3.500 24 4.500 Q28.500 6 28.500 11.500 Q24 6.500 15.500 11Z" fill="#5a4236"/><path d="M24 39 Q24 24 30 18.500 Q36 17 40 19 V39 Z" fill="#d9322b"/><path d="M6 39 Q6 28 14 25 L22 27 L25 34 L22 39 Z" fill="#ddb0a8"/><path d="M3 30 Q5 25 10 26 L9 36 Z" fill="#d2444a"/><path d="M8 25 Q12 22 17 24 L14 30 Z" fill="#d8d2ca"/><circle cx="31" cy="29" r="1.600" fill="#f3e3da"/><circle cx="34" cy="23" r="1.300" fill="#f3e3da"/><circle cx="27" cy="35" r="1.300" fill="#f3e3da"/></g></svg></div>
    <div class="mb"><svg width="12" height="12"><use href="#micoff"/></svg></div>
  </div>
  <!-- r3c1 -->
  <div class="tile" style="left:816.400px;top:260.400px;background:linear-gradient(120deg,#f8f1ea 0%,#f8ebe8 50%,#f6e9ec 100%)">
    <div class="av" style="margin-top:.7px"><svg width="39" height="39" viewBox="0 0 39 39"><rect width="39" height="39" fill="#1c2619"/><g filter="url(#vb3b)"><rect x="0" y="21" width="17" height="18" fill="#8ab650"/><rect x="3" y="20" width="13" height="3.500" fill="#c9d6b0"/><circle cx="10.500" cy="5.500" r="1.600" fill="#8a9a9a"/><path d="M15 26 Q13 8 22 2.500 Q31 -1 37 8 Q41 16 39 28 L30 32 L20 30 Z" fill="#3b2b29"/><path d="M17 39 Q17.500 30 20 27 H26.500 Q27.500 32 27.500 39 Z" fill="#d9aa92"/><ellipse cx="20.500" cy="17.500" rx="5.800" ry="9.800" fill="#dcaa98" transform="rotate(-8 20.500 17.500)"/><path d="M15 25 Q13.500 11 19.500 6.500 Q17 13 17 20 Q17 29 19 37 L15.500 39 Q14.200 32 15 25Z" fill="#b38a68"/><path d="M19.500 6.500 Q27 4 29 12 Q30 20 27.500 26 Q28 16 24 10 Q22 7 19.500 6.500Z" fill="#3b2b29"/><path d="M27 39 Q27.500 27 33 22 Q38 21 40 24 V39 Z" fill="#e3dfdb"/><path d="M29 33 L32 27 M32 36 L36 27 M35 38 L39 29" stroke="#5a4a50" stroke-width="1.100"/></g></svg></div>
    <div class="mb"><svg width="12" height="12"><use href="#micoff"/></svg></div>
  </div>
  <!-- r3c2 -->
  <div class="tile" style="left:915.300px;top:260.400px;background:linear-gradient(120deg,#f6ecef 0%,#f6e4eb 50%,#f3e6ee 100%)">
    <div class="av" style="margin-top:.7px"><svg width="39" height="39" viewBox="0 0 39 39"><rect width="39" height="39" fill="#2a2420"/><g filter="url(#vb3b)"><path d="M4 39 Q2 12 13 4 Q20 0 27 4 Q37 12 35 36 L30 39 Z" fill="#4a3229"/><path d="M7 34 Q8 16 15 7 Q12 18 13 36 Z" fill="#7a5a4a"/><ellipse cx="20.200" cy="15.600" rx="7.500" ry="10.600" fill="#e8c5b5"/><path d="M12.600 15 Q13 4 20.200 4.400 Q27.500 4 27.900 15 Q25 7.500 20.200 8 Q15.500 7.500 12.600 15Z" fill="#3f2a22"/><path d="M15 14.500 H18 M22.500 14.500 H25.500" stroke="#6a4a40" stroke-width="1.100"/><path d="M18 21.500 Q20.200 22.800 22.500 21.500" stroke="#c48a80" stroke-width="1.100" fill="none"/><path d="M9 39 Q10 30 16 27 L20.200 26 L25 27 Q33 29 36 37 L34 39 Z" fill="#efefeb"/></g></svg></div>
    <div class="mb"><svg width="12" height="12"><use href="#micoff"/></svg></div>
  </div>
  <!-- r4c1 КП -->
  <div class="tile" style="left:816.400px;top:334px;background:linear-gradient(100deg,#dff4ee 0%,#eaf5ee 40%,#f3f4ea 100%)">
    <div class="av ini" style="background:#d9e5ee;color:#2d4756">КП</div>
    <div class="mb"><svg width="12" height="12"><use href="#micoff"/></svg></div>
  </div>
  <!-- r4c2 ВХ -->
  <div class="tile" style="left:915.300px;top:334px;background:linear-gradient(120deg,#f5f0e6 0%,#f4ede8 50%,#f3ecec 100%)">
    <div class="av ini" style="background:#d7d5f1;color:#2a2a5c">ВХ</div>
    <div class="mb"><svg width="12" height="12"><use href="#micoff"/></svg></div>
  </div>
  <!-- r5 ГГ -->
  <div class="tile" style="left:866px;top:408.300px;background:linear-gradient(110deg,#f3eff3 0%,#ecf0f6 50%,#e3f3f5 100%)">
    <div class="av ini" style="background:#f3cfe3;color:#5c2748">ГГ</div>
    <div class="mb"><svg width="12" height="12"><use href="#micoff"/></svg></div>
  </div>
  <!-- webcam -->
  <div class="abs" style="left:816.200px;top:482.200px;width:193.800px;height:106.600px;border-radius:5px;overflow:hidden;background:#4a3a44">
    <svg width="194" height="107" viewBox="0 0 194 107" style="position:absolute;left:0;top:0">
      <defs>
        <linearGradient id="wbg" x1="0" y1="0" x2="1" y2="0"><stop offset="0" stop-color="#7a6c74"/><stop offset="0.180" stop-color="#6a5a64"/><stop offset="0.270" stop-color="#54424e"/><stop offset="0.340" stop-color="#3a2632"/><stop offset="0.800" stop-color="#432f3b"/><stop offset="0.900" stop-color="#5a4753"/><stop offset="1" stop-color="#66545f"/></linearGradient>
        <linearGradient id="wbg2" x1="0" y1="0" x2="0" y2="1"><stop offset="0" stop-color="#000" stop-opacity="0"/><stop offset="1" stop-color="#1a0c18" stop-opacity="0.350"/></linearGradient>
        <radialGradient id="face" cx="0.480" cy="0.300" r="0.750"><stop offset="0" stop-color="#f6dcc2"/><stop offset="0.400" stop-color="#e3b69c"/><stop offset="1" stop-color="#bf8a74"/></radialGradient>
      </defs>
      <rect width="194" height="107" fill="url(#wbg)"/>
      <rect width="194" height="107" fill="url(#wbg2)"/>
      <g filter="url(#vb)">
        <path d="M62 58 Q56 18 84 0 L146 -3 Q172 14 169 54 Q168 76 156 86 L76 84 Q63 76 62 58 Z" fill="#915f45"/>
        <path d="M70 44 Q70 14 94 -2 L80 -3 Q58 14 63 56 Z" fill="#ab7858"/>
        <path d="M150 20 Q166 34 164 62 Q162 76 154 84 Q160 60 150 20 Z" fill="#7a4c38"/>
      </g>
      <g filter="url(#vb2)">
        <path d="M36 112 Q50 96 73 87 L100 100 L128 98 L146 85 Q176 90 198 100 V112 Z" fill="#cfc3b8"/>
        <path d="M96 92 L128 92 L132 107 H94 Z" fill="#cf9f86"/>
        <path d="M81 50 Q79 18 98 6 Q112 0 130 4 Q152 14 150 48 Q149 76 132 92 Q114 103 100 94 Q83 80 81 50 Z" fill="url(#face)"/>
        <path d="M80 30 Q86 8 104 3 Q124 -2 140 8 Q150 18 151 34 Q140 12 118 10 Q96 10 80 30 Z" fill="#9a6549"/>
        <path d="M84 41 Q93 35 103 40 M122 37 Q132 31 143 36" stroke="#8a5a42" stroke-width="1.800" fill="none"/>
        <ellipse cx="90" cy="47.500" rx="6.500" ry="2.300" fill="#5e3e34"/><ellipse cx="129" cy="44" rx="7" ry="2.300" fill="#5e3e34"/>
        <path d="M103 62 Q108 66 114 62" stroke="#b07a64" stroke-width="1.800" fill="none"/>
        <path d="M100 81 Q111 78 123 81 Q111 86 100 81 Z" fill="#bf7a70"/>
      </g>
      <g filter="url(#vb3b)" stroke="#4a3a34" stroke-width="1.700" fill="none">
        <path d="M44 107 L58 96 M52 107 L68 92 M61 107 L78 90 M71 107 L86 93 M81 107 L93 97 M90 107 L97 100"/>
        <path d="M136 93 L147 107 M142 89 L158 107 M150 87 L168 107 M160 88 L178 107 M170 91 L188 107 M180 94 L196 106"/>
      </g>
    </svg>
    <div class="abs" style="left:7px;top:81px;width:23px;height:19.500px;border-radius:3px;background:rgba(28,22,26,.82)"><svg width="12" height="12" style="position:absolute;left:5.500px;top:3.800px"><use href="#micoff"/></svg></div>
  </div>
</div>
<!-- BOTTOM LABEL -->
<div class="abs" style="left:4px;top:602.300px;width:159px;height:19.800px;border-radius:3.500px;background:#7b7b7b"></div>
<div class="abs sx" style="left:8.800px;top:605.600px;font-size:10.700px;line-height:13px;color:#fff;white-space:nowrap;transform:scaleX(.92)">Olga Golovko (внешний)</div>
<div class="abs" style="left:124px;top:611.800px;width:10.500px;height:1.100px;background:#a2a2a2"></div>
<svg class="ico" style="left:143px;top:607.300px" width="10" height="10" viewBox="0 0 10 10"><path d="M5 0 V10 M0 5 H10" stroke="#dedede" stroke-width="1.100"/></svg>
</body>
</html>
